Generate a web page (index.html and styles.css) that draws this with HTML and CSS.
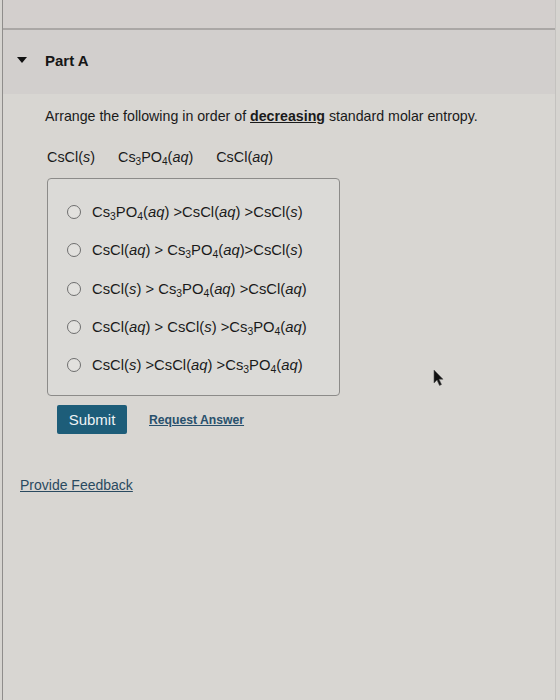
FILE: index.html
```html
<!DOCTYPE html>
<html>
<head>
<meta charset="utf-8">
<link rel="stylesheet" href="styles.css">
</head>
<body>
<div class="frame">
  <div class="topband"></div>
  <div class="header">
    <span class="caret"></span>
    <span class="part">Part A</span>
  </div>
  <div class="content">
    <p class="question">Arrange the following in order of <b class="em">decreasing</b> standard molar entropy.</p>
    <p class="species">
      <span>CsCl(<i>s</i>)</span>
      <span>Cs<sub>3</sub>PO<sub>4</sub>(<i>aq</i>)</span>
      <span>CsCl(<i>aq</i>)</span>
    </p>
    <div class="choices">
      <label class="opt"><span class="radio"></span><span>Cs<sub>3</sub>PO<sub>4</sub>(<i>aq</i>) &gt;CsCl(<i>aq</i>) &gt;CsCl(<i>s</i>)</span></label>
      <label class="opt"><span class="radio"></span><span>CsCl(<i>aq</i>) &gt; Cs<sub>3</sub>PO<sub>4</sub>(<i>aq</i>)&gt;CsCl(<i>s</i>)</span></label>
      <label class="opt"><span class="radio"></span><span>CsCl(<i>s</i>) &gt; Cs<sub>3</sub>PO<sub>4</sub>(<i>aq</i>) &gt;CsCl(<i>aq</i>)</span></label>
      <label class="opt"><span class="radio"></span><span>CsCl(<i>aq</i>) &gt; CsCl(<i>s</i>) &gt;Cs<sub>3</sub>PO<sub>4</sub>(<i>aq</i>)</span></label>
      <label class="opt"><span class="radio"></span><span>CsCl(<i>s</i>) &gt;CsCl(<i>aq</i>) &gt;Cs<sub>3</sub>PO<sub>4</sub>(<i>aq</i>)</span></label>
    </div>
    <div class="actions">
      <button class="submit">Submit</button>
      <a class="request">Request Answer</a>
    </div>
    <a class="feedback">Provide Feedback</a>
  </div>
  <svg class="cursor" width="14" height="18" viewBox="0 0 14 18"><path d="M2 1 L2 14 L5 11 L7.5 16.5 L9.5 15.5 L7 10.2 L11 10.2 Z" fill="#111" stroke="#555" stroke-width="0.6"/></svg>
</div>
</body>
</html>
```

FILE: styles.css
```css
html, body {
  margin: 0;
  padding: 0;
  background: #d6d4d0;
}
body {
  font-family: "Liberation Sans", Arial, sans-serif;
  color: #1a1a1a;
}
.frame {
  position: relative;
  width: 552px;
  height: 700px;
  margin-left: 2px;
  border-left: 1px solid #8f8d8b;
  border-right: 1px solid #c4c2bf;
  background: #d8d6d2;
  overflow: hidden;
}
.topband {
  height: 28px;
  background: #d3cfcd;
  border-bottom: 2px solid #aaa7a5;
}
.header {
  height: 64px;
  background: #d2cfcd;
  display: flex;
  align-items: center;
  padding-left: 14px;
  padding-bottom: 4px;
  box-sizing: border-box;
}
.caret {
  width: 0;
  height: 0;
  border-left: 5px solid transparent;
  border-right: 5px solid transparent;
  border-top: 6px solid #111;
  margin-right: 18px;
}
.part {
  font-weight: bold;
  font-size: 15px;
  color: #161616;
}
.content {
  padding: 1px 0 0 0;
}
.question {
  margin: 13px 0 0 42px;
  font-size: 14.2px;
}
.em {
  text-decoration: underline;
}
.species {
  margin: 25px 0 0 44px;
  font-size: 14.4px;
  display: flex;
  gap: 23px;
}
sub {
  font-size: 70%;
  vertical-align: -3px;
  line-height: 0;
}
i { font-style: italic; }
.choices {
  margin: 13px 0 0 44px;
  width: 293px;
  height: 218px;
  box-sizing: border-box;
  border: 1px solid #8c8b89;
  border-radius: 4px;
  background: #dbdad7;
  padding: 24px 0 0 19px;
  display: flex;
  flex-direction: column;
  gap: 20.25px;
}
.opt {
  display: flex;
  align-items: center;
  font-size: 14.8px;
  height: 18px;
}
.radio {
  width: 12px;
  height: 12px;
  border: 1px solid #6e6e6e;
  border-radius: 50%;
  background: #e2e1de;
  margin-right: 11px;
  flex: none;
}
.actions {
  margin: 9px 0 0 54px;
  display: flex;
  align-items: center;
  gap: 22px;
}
.submit {
  width: 70px;
  height: 29px;
  border: none;
  border-radius: 2px;
  background: #1d5d79;
  color: #eef3f5;
  font-family: "Liberation Sans", Arial, sans-serif;
  font-size: 15px;
  padding: 0;
}
.request {
  font-weight: bold;
  font-size: 12.2px;
  color: #28506c;
  text-decoration: underline;
}
.feedback {
  display: block;
  margin: 43px 0 0 17px;
  font-size: 14px;
  color: #2a4a60;
  text-decoration: underline;
}
.cursor {
  position: absolute;
  left: 429px;
  top: 369px;
}
```
